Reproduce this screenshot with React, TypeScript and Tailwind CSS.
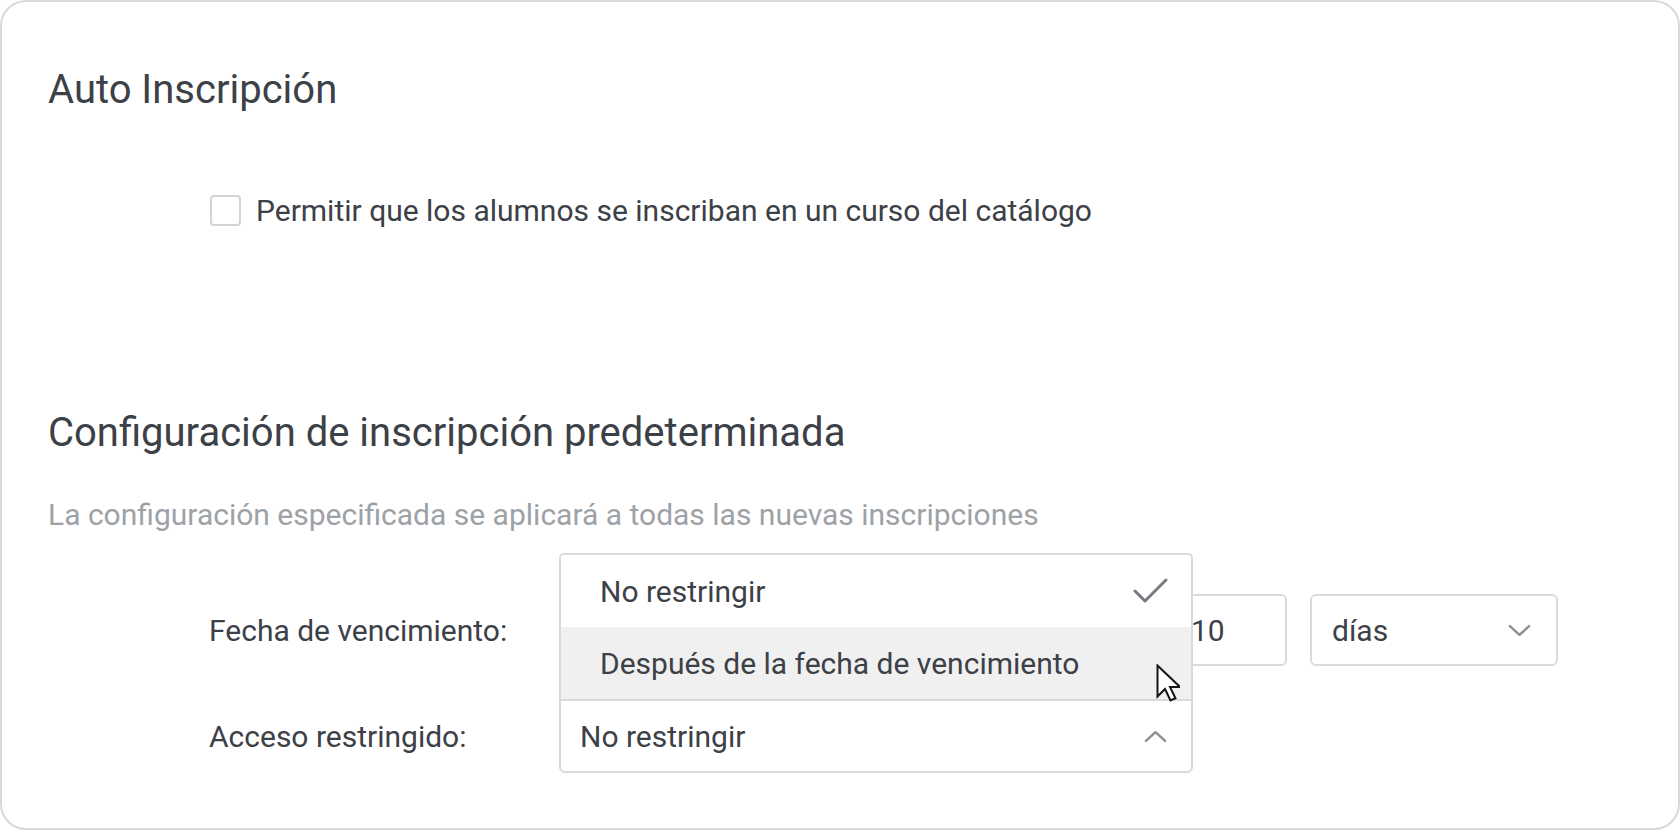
import React from 'react';

const textColor = 'text-[#3c4047]';

const ChevronDown: React.FC<{ className?: string }> = ({ className }) => (
  <svg className={className} viewBox="0 0 24 13" fill="none" stroke="currentColor" strokeWidth={2.6} strokeLinecap="round" strokeLinejoin="round">
    <path d="M2 2l10 9 10-9" />
  </svg>
);

const ChevronUp: React.FC<{ className?: string }> = ({ className }) => (
  <svg className={className} viewBox="0 0 24 13" fill="none" stroke="currentColor" strokeWidth={2.6} strokeLinecap="round" strokeLinejoin="round">
    <path d="M2 11l10-9 10 9" />
  </svg>
);

const Check: React.FC<{ className?: string }> = ({ className }) => (
  <svg className={className} viewBox="0 0 35 26" fill="none" stroke="currentColor" strokeWidth={3} strokeLinecap="round" strokeLinejoin="round">
    <path d="M2 13l10 10L33 2" />
  </svg>
);

const Cursor: React.FC<{ className?: string }> = ({ className }) => (
  <svg className={className} viewBox="0 0 24 38" fill="none">
    <path d="M1.5 1.5v31l7.5-7.5 5.5 11.5 5-2.3-5.5-11.2h10z" fill="#fff" stroke="#141414" strokeWidth={2} strokeLinejoin="miter" />
  </svg>
);

const App: React.FC = () => {
  return (
    <div className="w-[1680px] h-[830px] bg-white font-['Roboto',sans-serif]">
      <div className="h-[830px] border-2 border-[#d9d9d9] rounded-[26px] pl-[46px] flex flex-col">
        <div className="mt-[58px] h-[60px] flex items-center">
          <h2 className={`text-[40px] ${textColor}`}>Auto Inscripción</h2>
        </div>

        <label className="mt-[60px] h-[60px] ml-[162px] flex items-center gap-[15px]">
          <span className="w-[31px] h-[31px] border-2 border-[#d4d4d4] rounded-[4px] bg-white" />
          <span className={`text-[30px] ${textColor}`}>Permitir que los alumnos se inscriban en un curso del catálogo</span>
        </label>

        <div className="mt-[163px] h-[60px] flex items-center">
          <h2 className={`text-[40px] ${textColor}`}>Configuración de inscripción predeterminada</h2>
        </div>

        <div className="mt-[31px] h-[40px] flex items-center">
          <p className="text-[30px] text-[#9da2a7]">La configuración especificada se aplicará a todas las nuevas inscripciones</p>
        </div>

        {/* Fecha de vencimiento */}
        <div className="mt-[60px] h-[72px] ml-[161px] flex items-center">
          <span className={`w-[350px] text-[30px] ${textColor}`}>Fecha de vencimiento:</span>
          <div className="w-[590px] h-[72px] border-2 border-[#dadada] rounded-[6px] flex items-center justify-between px-[20px]">
            <span className={`text-[30px] ${textColor}`}>Después de</span>
            <ChevronDown className="w-[23px] h-[13px] text-[#8d9196]" />
          </div>
          <div className="ml-[22px] w-[116px] h-[72px] border-2 border-[#dadada] rounded-[6px] flex items-center pl-[18px]">
            <span className={`text-[30px] ${textColor}`}>10</span>
          </div>
          <div className="ml-[23px] w-[248px] h-[72px] border-2 border-[#dadada] rounded-[6px] flex items-center justify-between pl-[20px] pr-[25px]">
            <span className={`text-[30px] ${textColor}`}>días</span>
            <ChevronDown className="w-[23px] h-[13px] text-[#8d9196]" />
          </div>
        </div>

        {/* Acceso restringido */}
        <div className="mt-[33px] h-[74px] ml-[161px] flex items-center">
          <span className={`w-[350px] text-[30px] ${textColor}`}>Acceso restringido:</span>
          <div className="relative w-[634px] h-[74px]">
            <div className="absolute left-0 right-0 bottom-full h-[146px] bg-white border-2 border-b-0 border-[#dadada] rounded-t-[5px] flex flex-col z-10 overflow-hidden">
              <div className="h-[72px] flex items-center justify-between pl-[39px] pr-[23px]">
                <span className={`text-[30px] ${textColor}`}>No restringir</span>
                <Check className="w-[35px] h-[26px] text-[#76797e]" />
              </div>
              <div className="h-[72px] bg-[#f0f0f0] flex items-center pl-[39px]">
                <span className={`text-[30px] ${textColor}`}>Después de la fecha de vencimiento</span>
              </div>
            </div>
            <div className="h-[74px] border-2 border-[#dadada] rounded-b-[6px] bg-white flex items-center justify-between pl-[19px] pr-[24px]">
              <span className={`text-[30px] ${textColor}`}>No restringir</span>
              <ChevronUp className="w-[23px] h-[13px] text-[#8d9196]" />
            </div>
            <Cursor className="absolute z-20 left-[597px] top-[-35px] w-[24px] h-[38px]" />
          </div>
        </div>
      </div>
    </div>
  );
};

export default App;
